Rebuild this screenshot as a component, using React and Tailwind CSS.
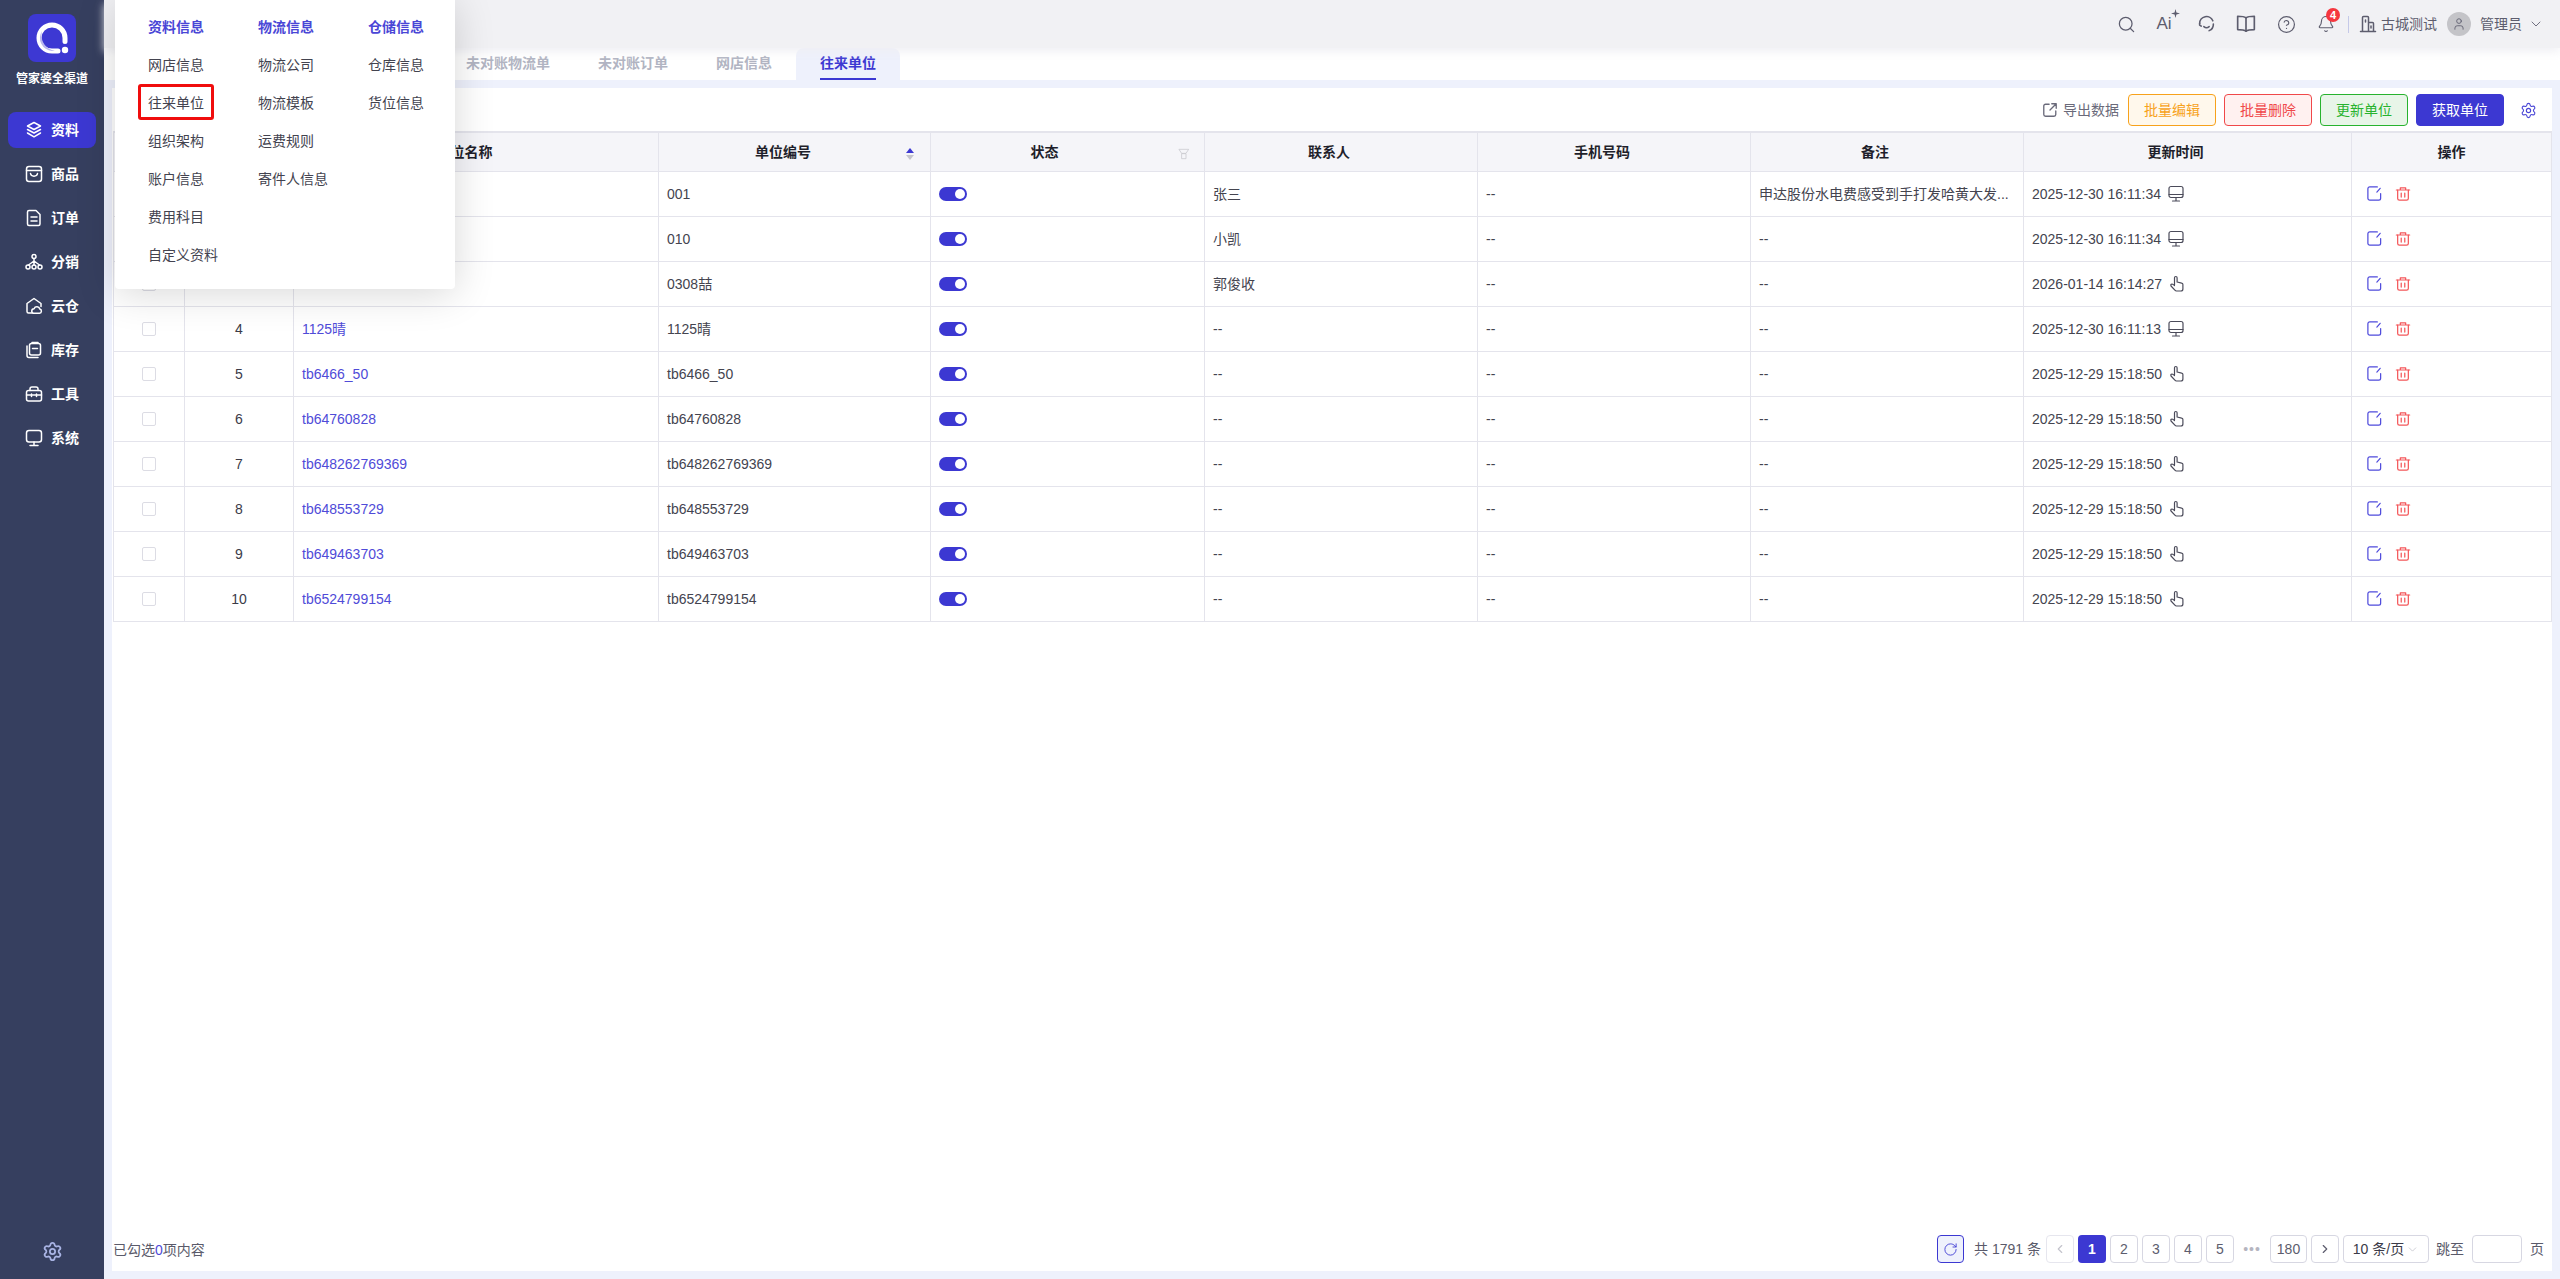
import { Search, Settings, ChevronDown, ChevronLeft, ChevronRight, RotateCw, CircleHelp, Bell, User } from 'lucide-react';

const FONT = "font-['Liberation_Sans','Noto_Sans_CJK_SC',sans-serif]";

const Svg = ({ className = '', children, size = 18, sw = 1.5 }) => (
  <svg
    width={size}
    height={size}
    viewBox="0 0 18 18"
    fill="none"
    stroke="currentColor"
    strokeWidth={sw}
    strokeLinecap="round"
    strokeLinejoin="round"
    className={className}
  >
    {children}
  </svg>
);

const navIcons = {
  layers: (
    <Svg>
      <path d="M9 1.5 15.5 5 9 8.5 2.5 5z" />
      <path d="M2.5 8.5 9 12l6.5-3.5" />
      <path d="M2.5 12 9 15.8l6.5-3.8" />
    </Svg>
  ),
  goods: (
    <Svg>
      <rect x="1.5" y="1.5" width="15" height="15" rx="2.5" />
      <path d="M1.5 5.5h15" />
      <path d="M5.5 8.5c.5 3.5 6.500 3.500 7 0" />
    </Svg>
  ),
  order: (
    <Svg>
      <path d="M4 1.500h7l4 4v9.500a1.500 1.500 0 0 1-1.500 1.500h-9.500a1.500 1.500 0 0 1-1.500-1.500v-12a1.500 1.500 0 0 1 1.500-1.500z" />
      <path d="M6 8h6M6 12h6" />
    </Svg>
  ),
  share: (
    <Svg size={20}>
      <circle cx="9" cy="3.500" r="2" />
      <circle cx="3" cy="14" r="2" />
      <circle cx="9" cy="14" r="2" />
      <circle cx="15" cy="14" r="2" />
      <path d="M9 5.500V12M3.500 12 9 8l5.500 4" />
    </Svg>
  ),
  cloud: (
    <Svg>
      <path d="M7 16H3.500a1.500 1.500 0 0 1-1.500-1.500V6.500L9 1.500l7 5v3" />
      <path d="M9 16.300h5.500a2.200 2.200 0 0 0 .3-4.300 3 3 0 0 0-5.700-.3 2.300 2.300 0 0 0-.1 4.600z" />
    </Svg>
  ),
  stock: (
    <Svg>
      <path d="M2 5v9.500a2 2 0 0 0 2 2h9" />
      <rect x="4.500" y="2.500" width="11" height="11.500" rx="2" />
      <path d="M7 1.500h6M7.500 7.500h5" />
    </Svg>
  ),
  tool: (
    <Svg>
      <rect x="1.500" y="5.500" width="15" height="10.500" rx="2" />
      <path d="M5 5.500V4a2 2 0 0 1 2-2h4a2 2 0 0 1 2 2v1.500" />
      <path d="M1.500 10h15M6.500 9v2.500M11.500 9v2.500" />
    </Svg>
  ),
  system: (
    <Svg>
      <rect x="1.500" y="1.500" width="15" height="11.500" rx="2.500" />
      <path d="M9 13v3.500M5 16.500h8" />
    </Svg>
  ),
};

const navItems = [
  ['layers', '资料', true],
  ['goods', '商品'],
  ['order', '订单'],
  ['share', '分销'],
  ['cloud', '云仓'],
  ['stock', '库存'],
  ['tool', '工具'],
  ['system', '系统'],
];

function Logo() {
  return (
    <div className="h-12 w-12 rounded-lg bg-[#3d38d3] flex items-center justify-center">
      <svg width="48" height="48" viewBox="0 0 48 48" fill="none">
        <path
          d="M37 27.500V24a13 13 0 1 0-13 13h6"
          stroke="#ffffff"
          strokeWidth="5"
          strokeLinecap="round"
        />
        <path d="M14 17a13 13 0 0 0 10 20h3a16 16 0 0 1-13-20z" fill="#b9b6ee" />
        <circle cx="37" cy="36" r="3.200" fill="#ffffff" />
      </svg>
    </div>
  );
}

function Sidebar() {
  return (
    <aside className="w-[104px] shrink-0 h-full bg-[#363f5f] flex flex-col items-center text-white">
      <div className="mt-[14px]">
        <Logo />
      </div>
      <div className="mt-[9px] text-xs leading-4 font-bold">管家婆全渠道</div>
      <nav className="mt-[25px] flex flex-col gap-2 w-[88px]">
        {navItems.map(([icon, label, active]) => (
          <div
            key={label}
            className={`h-9 rounded-lg flex items-center pl-[17px] gap-2 ${active ? 'bg-[#3c38d2]' : ''}`}
          >
            <span className="w-[18px] h-[18px] flex items-center justify-center">{navIcons[icon]}</span>
            <span className="text-sm font-bold">{label}</span>
          </div>
        ))}
      </nav>
      <div className="mt-auto mb-[17px] text-[#a9b4e4]">
        <Settings size={21} strokeWidth={2} />
      </div>
    </aside>
  );
}

const menuColumns = [
  ['资料信息', '网店信息', '往来单位', '组织架构', '账户信息', '费用科目', '自定义资料'],
  ['物流信息', '物流公司', '物流模板', '运费规则', '寄件人信息'],
  ['仓储信息', '仓库信息', '货位信息'],
];

function PopupMenu() {
  return (
    <div className="absolute left-[115px] top-0 z-20 w-[340px] h-[289px] bg-white rounded-b shadow-[0_4px_40px_rgba(0,0,0,0.16)] pl-[33px] pt-2 flex">
      {menuColumns.map((col, i) => (
        <div key={i} className="w-[110px] shrink-0 flex flex-col">
          {col.map((item, j) => (
            <div
              key={item}
              className={`relative h-[38px] leading-[38px] text-sm whitespace-nowrap ${j === 0 ? 'text-[#4a46d6] font-bold' : 'text-[#43434f]'}`}
            >
              {item}
              {item === '往来单位' && (
                <span className="absolute left-[-10px] top-0 w-[76px] h-[36px] border-[3px] border-[#f00d0d] rounded-[3px]" />
              )}
            </div>
          ))}
        </div>
      ))}
    </div>
  );
}

function TopBar() {
  return (
    <header className="relative z-10 h-12 shrink-0 bg-[#f1f1f4] shadow-[0_4px_8px_rgba(240,240,244,0.9)] flex items-center justify-end text-[#5d5d6e]">
      <div className="flex items-center">
        <span className="w-10 flex justify-center"><Search size={19} strokeWidth={1.6} /></span>
        <span className="relative w-10 flex justify-center text-[17px] leading-5">
          <span className="pr-1">Ai</span>
          <svg width="9" height="9" viewBox="0 0 9 9" className="absolute left-[25px] top-[-5px]" fill="currentColor">
            <path d="M4.500 0 5.400 3.600 9 4.500 5.400 5.400 4.500 9 3.600 5.400 0 4.500 3.600 3.600z" />
          </svg>
        </span>
        <span className="w-10 flex justify-center">
          <Svg size={19}>
            <path d="M2.500 8a6.500 6.500 0 0 1 12.500-2.500" />
            <path d="M15.500 8.500a6.500 6.500 0 0 1-4 6.300" />
            <path d="M2.500 8v1.500l1.500 1M6.500 11c1.500 1.300 3.500 1.300 5 0" />
          </Svg>
        </span>
        <span className="w-10 flex justify-center">
          <Svg size={20}>
            <path d="M9 3.500C7.500 2.300 4.500 2 1.500 2v12c3 0 6 .3 7.500 1.500 1.500-1.200 4.500-1.500 7.500-1.500V2c-3 0-6 .3-7.500 1.500z" />
            <path d="M9 3.500v12" />
          </Svg>
        </span>
        <span className="w-10 flex justify-center"><CircleHelp size={19} strokeWidth={1.5} /></span>
        <span className="relative w-10 flex justify-center">
          <Bell size={18} strokeWidth={1.5} />
          <span className="absolute left-[20px] top-[-7px] w-[14px] h-[14px] rounded-full bg-[#f5373f] text-white text-[11px] leading-[14px] font-bold text-center">
            4
          </span>
        </span>
      </div>
      <span className="ml-[2px] w-px h-[17px] bg-[#c5c9e8]" />
      <span className="ml-[10px]">
        <Svg>
          <path d="M1.500 16.500h15M3.500 16.500V2.500a1 1 0 0 1 1-1h4a1 1 0 0 1 1 1v14M9.500 7.500h4a1 1 0 0 1 1 1v8M6.500 5v2M12 11v2" />
        </Svg>
      </span>
      <span className="ml-1 text-sm">古城测试</span>
      <span className="ml-[10px] w-6 h-6 rounded-full bg-[#c4c4c8] flex items-center justify-center">
        <User size={14} strokeWidth={1.5} className="text-[#5d5d6e]" />
      </span>
      <span className="ml-[9px] text-sm">管理员</span>
      <ChevronDown size={16} strokeWidth={1.3} className="ml-[6px] mr-4" />
    </header>
  );
}

const tabs = ['未对账物流单', '未对账订单', '网店信息', '往来单位'];

function Tabs() {
  return (
    <div className="h-8 shrink-0 bg-white flex pl-[338px]">
      {tabs.map((t, i) => {
        const active = i === tabs.length - 1;
        return (
          <div
            key={t}
            className={`px-6 h-8 text-sm font-bold leading-[30px] ${active ? 'bg-[#eef1fc] rounded-t-lg text-[#3c38d2]' : 'text-[#b1b4c2]'}`}
          >
            <span className={`inline-block h-8 ${active ? 'border-b-2 border-[#3c38d2]' : ''}`}>{t}</span>
          </div>
        );
      })}
    </div>
  );
}

function Toolbar() {
  const btn = 'w-[88px] h-8 rounded text-sm flex items-center justify-center border';
  return (
    <div className="h-[43px] flex items-start justify-end pt-[6px]">
      <div className="flex items-center h-8 text-sm text-[#6a6a7a] mr-[9px] gap-[5px]">
        <Svg size={16}>
          <path d="M8 2.500H4a2 2 0 0 0-2 2v9.500a2 2 0 0 0 2 2h9.500a2 2 0 0 0 2-2v-4" />
          <path d="M11 2h5v5M16 2 9 9" />
        </Svg>
        导出数据
      </div>
      <div className="flex gap-2">
        <button className={`${btn} border-[#f7a21c] bg-[#fff8ec] text-[#f7a21c]`}>批量编辑</button>
        <button className={`${btn} border-[#f0484a] bg-[#fff1f0] text-[#f0484a]`}>批量删除</button>
        <button className={`${btn} border-[#27b32e] bg-[#e8f5e8] text-[#27b32e]`}>更新单位</button>
        <button className={`${btn} border-[#3c38d2] bg-[#3c38d2] text-white`}>获取单位</button>
      </div>
      <span className="h-8 ml-4 mr-[15px] flex items-center text-[#4a46d6]">
        <Settings size={17} strokeWidth={1.6} />
      </span>
    </div>
  );
}

// row 3's name sits fully behind the open menu, only the code column shows it
const rows = [
  ['1', '001', '001', '张三', '申达股份水电费感受到手打发哈黄大发...', '2025-12-30 16:11:34', 'pc'],
  ['2', '010', '010', '小凯', '--', '2025-12-30 16:11:34', 'pc'],
  ['3', '', '0308喆', '郭俊收', '--', '2026-01-14 16:14:27', 'hand'],
  ['4', '1125晴', '1125晴', '--', '--', '2025-12-30 16:11:13', 'pc'],
  ['5', 'tb6466_50', 'tb6466_50', '--', '--', '2025-12-29 15:18:50', 'hand'],
  ['6', 'tb64760828', 'tb64760828', '--', '--', '2025-12-29 15:18:50', 'hand'],
  ['7', 'tb648262769369', 'tb648262769369', '--', '--', '2025-12-29 15:18:50', 'hand'],
  ['8', 'tb648553729', 'tb648553729', '--', '--', '2025-12-29 15:18:50', 'hand'],
  ['9', 'tb649463703', 'tb649463703', '--', '--', '2025-12-29 15:18:50', 'hand'],
  ['10', 'tb6524799154', 'tb6524799154', '--', '--', '2025-12-29 15:18:50', 'hand'],
];

const PcIcon = () => (
  <Svg size={18} className="text-[#4b4b5a]" sw={1.2}>
    <rect x="2" y="1.500" width="14" height="11" rx="2" />
    <path d="M2 9.500h14M9 12.500v3.500M5.500 16h7" />
  </Svg>
);

const HandIcon = () => (
  <Svg size={18} className="text-[#4b4b5a]" sw={1.2}>
    <path d="M6.500 10V2.800a1.300 1.300 0 0 1 2.600 0V7l4.600 1.100a1.500 1.500 0 0 1 1.200 1.500v4.400a2 2 0 0 1-2 2H8.500a2 2 0 0 1-1.600-.8L3 11c-.8-1.300.8-2.600 2-1.600l1.500 1.200" />
  </Svg>
);

const EditIcon = () => (
  <Svg size={17} className="text-[#4f4bdc]" sw={1.3}>
    <path d="M15.500 9v5a2 2 0 0 1-2 2h-9.500a2 2 0 0 1-2-2V4a2 2 0 0 1 2-2h8" />
    <path d="M15 3.500 11.500 7.500" />
  </Svg>
);

const TrashIcon = () => (
  <Svg size={16} className="text-[#f4575a]" sw={1.4}>
    <path d="M1.500 4.500h15M6 4.500V2h6v2.500" />
    <path d="M3 4.500V14a2 2 0 0 0 2 2h8a2 2 0 0 0 2-2V4.500" />
    <path d="M7 8v4.500M11 8v4.500" />
  </Svg>
);

const SortIcon = () => (
  <span className="absolute right-[16px] top-[15px] flex flex-col gap-[2px]">
    <span className="w-0 h-0 border-x-[4px] border-x-transparent border-b-[5px] border-b-[#3c38d2]" />
    <span className="w-0 h-0 border-x-[4px] border-x-transparent border-t-[5px] border-t-[#c4c4cc]" />
  </span>
);

const FilterIcon = () => (
  <span className="absolute right-[14px] top-[15px] text-[#c9c9cf]">
    <Svg size={12} sw={1.2}>
      <path d="M2 2h14l-4 6H6z" />
      <path d="M6 8.500h6V16H6z" />
    </Svg>
  </span>
);

const thBase = 'relative border border-[#e4e4ec] border-t-2 bg-[#f5f5f9] text-sm font-bold text-[#1f1f2b] text-center';
const td = 'border border-[#e4e4ec] px-2 text-sm whitespace-nowrap overflow-hidden';
const tdText = `${td} text-[#44444f]`;

function DataTable() {
  return (
    <table className="table-fixed border-collapse w-[2438px] ml-px">
      <colgroup>
        <col className="w-[71px]" />
        <col className="w-[109px]" />
        <col className="w-[365px]" />
        <col className="w-[272px]" />
        <col className="w-[274px]" />
        <col className="w-[273px]" />
        <col className="w-[273px]" />
        <col className="w-[273px]" />
        <col className="w-[328px]" />
        <col className="w-[200px]" />
      </colgroup>
      <thead>
        <tr className="h-[39px]">
          <th className={thBase}></th>
          <th className={thBase}></th>
          <th className={`${thBase} pr-[23px]`}>单位名称</th>
          <th className={`${thBase} pr-[23px]`}>单位编号<SortIcon /></th>
          <th className={`${thBase} pr-[46px]`}>状态<FilterIcon /></th>
          <th className={`${thBase} pr-6`}>联系人</th>
          <th className={`${thBase} pr-6`}>手机号码</th>
          <th className={`${thBase} pr-6`}>备注</th>
          <th className={`${thBase} pr-6`}>更新时间</th>
          <th className={thBase}>操作</th>
        </tr>
      </thead>
      <tbody>
        {rows.map((r) => (
          <tr key={r[0]} className="h-[45px]">
            <td className={td}>
              <div className="ml-[20px] w-[14px] h-[14px] rounded-[2px] border border-[#dcdce4] bg-white" />
            </td>
            <td className={`${td} text-center text-[#3b3b48]`}>{r[0]}</td>
            <td className={`${td} text-[#4f4bd8]`}>{r[1]}</td>
            <td className={tdText}>{r[2]}</td>
            <td className={td}>
              <div className="w-7 h-[14px] rounded-full bg-[#3c38d2] flex items-center justify-end pr-[2px]">
                <span className="w-[10px] h-[10px] rounded-full bg-white" />
              </div>
            </td>
            <td className={tdText}>{r[3]}</td>
            <td className={tdText}>--</td>
            <td className={tdText}>{r[4]}</td>
            <td className={tdText}>
              <div className="flex items-center gap-[6px]">
                {r[5]}
                {r[6] === 'pc' ? <PcIcon /> : <HandIcon />}
              </div>
            </td>
            <td className={td}>
              <div className="flex items-center gap-3 pl-[6px]">
                <EditIcon />
                <TrashIcon />
              </div>
            </td>
          </tr>
        ))}
      </tbody>
    </table>
  );
}

const pageBtn = 'h-7 w-7 rounded border border-[#d7d7e2] bg-white flex items-center justify-center text-sm text-[#5d5d6e]';

function Footer() {
  return (
    <div className="mt-auto h-[49px] flex items-start justify-between pt-[13px] pl-px pr-2 text-sm text-[#5a5a6a]">
      <div className="h-7 leading-[30px]">
        已勾选<span className="text-[#4f4bd8]">0</span>项内容
      </div>
      <div className="flex items-center gap-1">
        <button className="h-7 w-[27px] rounded border border-[#3c38d2] bg-[#eef1fc] flex items-center justify-center text-[#3c38d2]">
          <RotateCw size={15} strokeWidth={1.4} />
        </button>
        <span className="ml-[6px] mr-[1px]">共 1791 条</span>
        <button className="h-7 w-7 rounded border border-[#e6e6ee] bg-white flex items-center justify-center text-[#c4c4cc]"><ChevronLeft size={14} /></button>
        <button className="h-7 w-7 rounded bg-[#3c38d2] text-white text-sm font-bold">1</button>
        {['2', '3', '4', '5'].map((n) => (
          <button key={n} className={pageBtn}>{n}</button>
        ))}
        <span className="w-7 text-center text-[#b5b5c0] tracking-[1px] leading-none">•••</span>
        <button className="h-7 w-[37px] rounded border border-[#d7d7e2] bg-white text-sm text-[#5d5d6e]">180</button>
        <button className={pageBtn}><ChevronRight size={14} /></button>
        <div className="h-7 w-[86px] rounded border border-[#d7d7e2] bg-white flex items-center justify-center gap-[2px] text-[#3b3b48]">
          10 条/页
          <ChevronDown size={13} strokeWidth={1.2} className="text-[#b5b5c0]" />
        </div>
        <span className="ml-[3px]">跳至</span>
        <div className="ml-[4px] h-7 w-[50px] rounded border border-[#d7d7e2] bg-white" />
        <span className="ml-1">页</span>
      </div>
    </div>
  );
}

export default function App() {
  return (
    <div className={`relative w-[2560px] h-[1279px] overflow-hidden flex ${FONT}`}>
      <Sidebar />
      <PopupMenu />
      <main className="flex-1 min-w-0 h-full flex flex-col bg-[#eef1fc]">
        <TopBar />
        <Tabs />
        <div className="flex-1 flex flex-col mt-2 ml-2 mr-2 mb-2 bg-white">
          <Toolbar />
          <DataTable />
          <Footer />
        </div>
      </main>
    </div>
  );
}
